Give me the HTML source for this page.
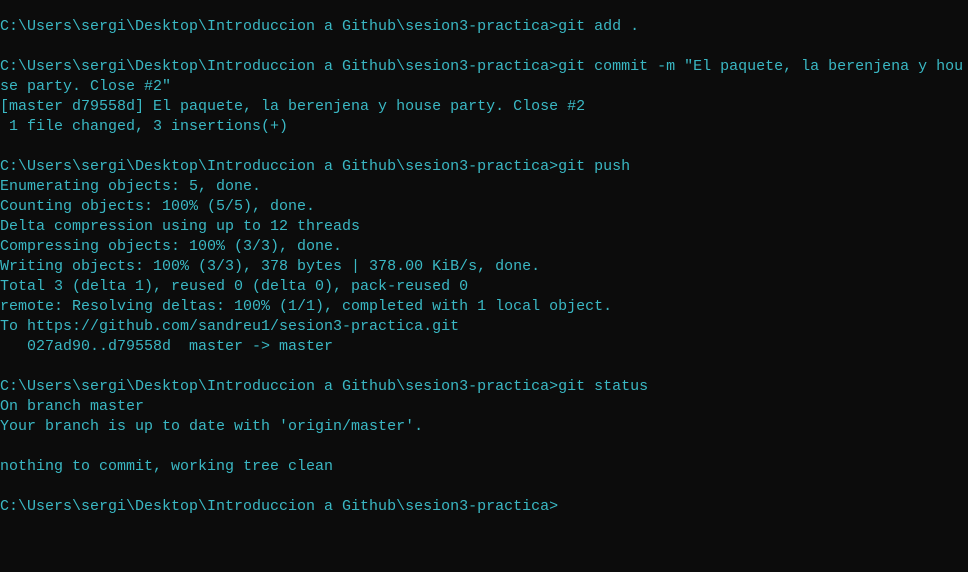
<!DOCTYPE html>
<html><head><meta charset="utf-8"><style>
html,body{margin:0;padding:0;background:#0c0c0c;width:968px;height:572px;overflow:hidden}
pre{margin:0;position:absolute;left:0;top:17px;font-family:"Liberation Mono",monospace;font-size:15px;line-height:20px;color:#3ab8c4;white-space:pre;letter-spacing:0}
</style></head><body><pre>C:\Users\sergi\Desktop\Introduccion a Github\sesion3-practica&gt;git add .

C:\Users\sergi\Desktop\Introduccion a Github\sesion3-practica&gt;git commit -m "El paquete, la berenjena y hou
se party. Close #2"
[master d79558d] El paquete, la berenjena y house party. Close #2
 1 file changed, 3 insertions(+)

C:\Users\sergi\Desktop\Introduccion a Github\sesion3-practica&gt;git push
Enumerating objects: 5, done.
Counting objects: 100% (5/5), done.
Delta compression using up to 12 threads
Compressing objects: 100% (3/3), done.
Writing objects: 100% (3/3), 378 bytes | 378.00 KiB/s, done.
Total 3 (delta 1), reused 0 (delta 0), pack-reused 0
remote: Resolving deltas: 100% (1/1), completed with 1 local object.
To https://github.com/sandreu1/sesion3-practica.git
   027ad90..d79558d  master -&gt; master

C:\Users\sergi\Desktop\Introduccion a Github\sesion3-practica&gt;git status
On branch master
Your branch is up to date with 'origin/master'.

nothing to commit, working tree clean

C:\Users\sergi\Desktop\Introduccion a Github\sesion3-practica&gt;</pre></body></html>
